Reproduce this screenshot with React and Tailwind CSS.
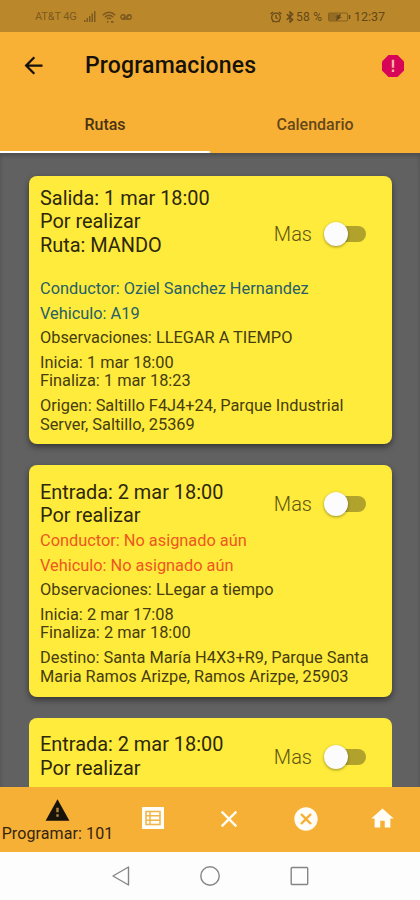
import React from "react";

const Icon = ({ className, children, viewBox = "0 0 24 24" }) => (
  <svg viewBox={viewBox} className={className} fill="currentColor">
    {children}
  </svg>
);

function StatusBar() {
  return (
    <div className="flex h-8 shrink-0 items-center bg-[#bb872b] pl-[35px] pr-[34px] pt-px text-[#7c5a1f]">
      <span className="w-[49px] whitespace-nowrap text-[11px] leading-4 tracking-[-0.15px]">AT&amp;T 4G</span>
      <Icon className="h-[11px] w-[12px] shrink-0" viewBox="0 0 12 11">
        <path d="M0 9h1.5v2H0zM2.5 7H4v4H2.500zM5 5h1.500v6H5zM7.500 2.500H9V11H7.500zM10 0h1.500v11H10z" />
      </Icon>
      <svg viewBox="0 0 14 12" className="ml-[6px] h-3 w-[14px]" fill="none" stroke="currentColor" strokeWidth="1.500">
        <path d="M.8 4.200C4.400.3 9.600.3 13.200 4.200M2.800 6.200c2.500-2.500 5.900-2.500 8.400 0M4.900 8c1.300-1.200 2.900-1.200 4.200 0" />
        <path d="M5 10.800h1.400M9 10.800h2.500" strokeWidth="1.800" />
      </svg>
      <svg viewBox="0 0 12 6" className="ml-[4px] h-[6px] w-3" fill="none" stroke="currentColor" strokeWidth="1.400">
        <circle cx="3" cy="3" r="2.200" />
        <circle cx="9" cy="3" r="2.200" />
        <path d="M3 5.200 5 2.500M9 .8 7 3.500M3 5h6" />
      </svg>
      <div className="ml-auto flex items-center text-[#634919]">
        <svg viewBox="0 0 12 12" className="h-3 w-3" fill="none" stroke="currentColor" strokeWidth="1.300">
          <circle cx="6" cy="6.500" r="4.300" />
          <path d="M6 4v2.700l1.800 1M.6 3 3 .9M11.400 3 9 .9M2.500 11l1-1M9.500 11l-1-1" />
        </svg>
        <svg viewBox="0 0 8 12" className="ml-[4px] h-3 w-2" fill="none" stroke="currentColor" strokeWidth="1.300">
          <path d="M.8 3.200 6.800 8.700 4 11.200V.8l2.800 2.500-6 5.500" />
        </svg>
        <span className="ml-[2px] w-[32px] whitespace-nowrap text-[12px] leading-4 tracking-[0.25px]">58 %</span>
        <svg viewBox="0 0 23 10" className="h-[10px] w-[23px]" fill="none" stroke="currentColor">
          <rect x=".5" y="1" width="19" height="8" rx="1" strokeWidth="1" opacity=".6" />
          <path d="M1 1.500h9v7H1z" fill="currentColor" stroke="none" opacity=".45" />
          <path d="M13 1.500 7 4.500h2L8 9l6-4h-2z" fill="currentColor" stroke="none" />
          <path d="M21.500 3v4" strokeWidth="1.500" />
        </svg>
        <span className="ml-[3px] w-8 whitespace-nowrap text-[12.500px] leading-4">12:37</span>
      </div>
    </div>
  );
}

function Header() {
  return (
    <header className="h-[121px] shrink-0 bg-[#f9b135]">
      <div className="flex h-[67px] items-center pl-[20px] pr-[15px] text-[#16120a]">
        <Icon className="h-[27px] w-[27px]">
          <path d="M20 11H7.830l5.590-5.590L12 4l-8 8 8 8 1.410-1.410L7.830 13H20v-2z" />
        </Icon>
        <h1 className="ml-[38px] text-[23px] font-medium leading-7 tracking-[0.150px]">Programaciones</h1>
        <Icon className="ml-auto h-6 w-6 text-[#d80458]">
          <path d="M16.500 1h-9L1 7.500v9L7.500 23h9l6.500-6.500v-9z" />
          <path fill="#f4b3a0" d="M10.800 5.800h2.400v8h-2.400zM10.800 15.500h2.400v2.400h-2.400z" />
        </Icon>
      </div>
      <nav className="grid h-[54px] grid-cols-2 text-center text-[16px] font-medium leading-[52px]">
        <div className="border-b-2 border-white text-[#4a3310]">Rutas</div>
        <div className="text-[#66481a]">Calendario</div>
      </nav>
    </header>
  );
}

const Toggle = () => (
  <div className="flex items-center">
    <span className="text-[20px] font-light leading-6 text-[#5e5413]">Mas</span>
    <span className="ml-[12px] flex h-6 w-[42px] items-center">
      <span className="z-10 h-6 w-6 rounded-full bg-[#fcfcfc] shadow-[0_1px_3px_rgba(0,0,0,0.4)]" />
      <span className="-ml-3 h-4 w-[30px] rounded-r-full bg-[#b1a22c]" />
    </span>
  </div>
);

function Card({ title, route, driver, vehicle, assigned, notes, start, end, place }) {
  const tint = assigned ? "text-[#276067]" : "text-[#ee5722]";
  return (
    <article
      className={`shrink-0 rounded-[8px] bg-[#ffeb3b] pl-[11px] pr-[26px] shadow-[0_3px_6px_rgba(0,0,0,0.45)] ${
        route ? "h-[268px] pt-[11px]" : "h-[232px] pt-[16px]"
      }`}
    >
      <div className={`flex items-center justify-between ${route ? "h-[93px]" : "h-[46px]"}`}>
        <div className={`text-[19.900px] leading-[23.400px] text-[#2d270c] ${route ? "mb-[23px]" : ""}`}>
          <p>{title}</p>
          <p>Por realizar</p>
          {route && <p>Ruta: {route}</p>}
        </div>
        <Toggle />
      </div>
      <div className={`-mr-5 flex flex-col gap-[5.900px] text-[16.350px] leading-[18.700px] text-[#463d10] ${route ? "" : "mt-[5px]"}`}>
        <p className={tint}>Conductor: {driver}</p>
        <p className={tint}>Vehiculo: {vehicle}</p>
        <p>Observaciones: {notes}</p>
        <div>
          <p>Inicia: {start}</p>
          <p>Finaliza: {end}</p>
        </div>
        <p>
          {place[0]}
          <br />
          {place[1]}
        </p>
      </div>
    </article>
  );
}

const none = "No asignado aún";
const destination = ["Destino: Santa María H4X3+R9, Parque Santa", "Maria Ramos Arizpe, Ramos Arizpe, 25903"];

const trips = [
  {
    title: "Salida: 1 mar 18:00", route: "MANDO", driver: "Oziel Sanchez Hernandez", vehicle: "A19", assigned: true,
    notes: "LLEGAR A TIEMPO", start: "1 mar 18:00", end: "1 mar 18:23",
    place: ["Origen: Saltillo F4J4+24, Parque Industrial", "Server, Saltillo, 25369"],
  },
  {
    title: "Entrada: 2 mar 18:00", driver: none, vehicle: none,
    notes: "LLegar a tiempo", start: "2 mar 17:08", end: "2 mar 18:00", place: destination,
  },
];

function BottomBar() {
  return (
    <div className="flex h-[65px] shrink-0 bg-[#f7b036] text-[#fffdf5]">
      <div className="flex w-[115px] shrink-0 flex-col items-center pt-[10px] text-[#17120a]">
        <Icon className="h-[26px] w-[27px]">
          <path d="M1 22h22L12 2z" />
          <path fill="#b98a3d" d="M10.900 10h2.200v4h-2.200zM10.900 16h2.200v2.200h-2.200z" />
        </Icon>
        <span className="whitespace-nowrap text-[16px] leading-[21px] tracking-[0.100px] text-[#33250e]">Programar: 101</span>
      </div>
      <div className="flex w-[76px] justify-center pt-[20px]">
        <svg viewBox="0 0 22 22" className="h-[22px] w-[22px]" fill="none">
          <path fill="currentColor" d="M0 0h22v22H0z" />
          <path stroke="#efb44a" strokeWidth="1.500" d="M4 4.500h14v13H4zM8 4.500v13M4 8.800h14M4 13.200h14" />
        </svg>
      </div>
      <div className="flex w-[76px] justify-center pt-[18px]">
        <Icon className="h-[28px] w-[28px]">
          <path d="M19 6.410 17.590 5 12 10.590 6.410 5 5 6.410 10.590 12 5 17.590 6.410 19 12 13.410 17.590 19 19 17.590 13.410 12z" />
        </Icon>
      </div>
      <div className="flex w-[77px] justify-center pt-[18px]">
        <Icon className="h-[28px] w-[28px]">
          <path d="M12 2C6.470 2 2 6.470 2 12s4.470 10 10 10 10-4.470 10-10S17.530 2 12 2zm5 13.590L15.590 17 12 13.410 8.410 17 7 15.590 10.590 12 7 8.410 8.410 7 12 10.590 15.590 7 17 8.410 13.410 12 17 15.590z" />
        </Icon>
      </div>
      <div className="flex w-[76px] justify-center pt-[18px]">
        <Icon className="h-[27px] w-[27px]">
          <path d="M10 20v-6h4v6h5v-8h3L12 3 2 12h3v8z" />
        </Icon>
      </div>
    </div>
  );
}

function SystemNav() {
  return (
    <div className="flex h-12 shrink-0 items-center bg-[#fdfdfd] pl-[111px] text-[#858585]">
      <svg viewBox="0 0 20 22" className="h-[22px] w-5" fill="none" stroke="currentColor" strokeWidth="1.400" strokeLinejoin="round">
        <path d="M17.500 2v18L2 11z" />
      </svg>
      <svg viewBox="0 0 20 20" className="ml-[69px] h-5 w-5" fill="none" stroke="currentColor" strokeWidth="1.400">
        <circle cx="10" cy="10" r="9.200" />
      </svg>
      <svg viewBox="0 0 20 20" className="ml-[70px] h-5 w-5" fill="none" stroke="currentColor" strokeWidth="1.400">
        <rect x="1.200" y="1.500" width="16.500" height="17" rx="1" />
      </svg>
    </div>
  );
}

export default function App() {
  return (
    <div className="flex h-[900px] w-[420px] flex-col overflow-hidden font-['Roboto',sans-serif]">
      <StatusBar />
      <Header />
      <main className="flex min-h-0 flex-1 flex-col gap-[21px] overflow-hidden bg-[#616161] pl-[29px] pr-[28px] pt-[23px] shadow-[inset_0_3px_4px_rgba(0,0,0,0.2)]">
        {trips.map((trip) => (
          <Card key={trip.title} {...trip} />
        ))}
        <article className="h-[69px] shrink-0 rounded-t-[8px] bg-[#ffeb3b] pl-[11px] pr-[26px] pt-[15px]">
          <div className="flex h-[47px] items-center justify-between">
            <div className="text-[19.900px] leading-[23.400px] text-[#2d270c]">
              <p>Entrada: 2 mar 18:00</p>
              <p>Por realizar</p>
            </div>
            <Toggle />
          </div>
        </article>
      </main>
      <BottomBar />
      <SystemNav />
    </div>
  );
}
